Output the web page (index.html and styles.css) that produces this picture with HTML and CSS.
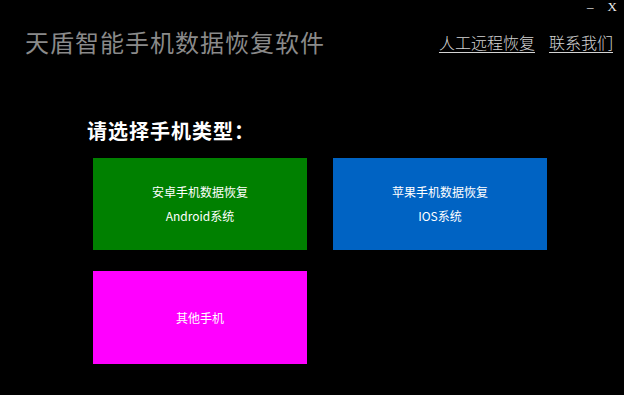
FILE: index.html
```html
<!DOCTYPE html>
<html lang="zh-CN">

<head>
    <meta charset="UTF-8">
    <meta name="viewport" content="width=device-width, initial-scale=1.0">
    <title>天盾智能手机数据恢复软件</title>
    <link rel="stylesheet" href="styles.css">
</head>

<body>
    <div class="window">
        <div class="titlebar">
            <span class="win-btn win-min">–</span>
            <span class="win-btn win-close">X</span>
        </div>
        <div class="header">
            <h1 class="app-title">天盾智能手机数据恢复软件</h1>
            <div class="links">
                <a href="#" class="link">人工远程恢复</a>
                <a href="#" class="link">联系我们</a>
            </div>
        </div>
        <div class="content">
            <h2 class="choose">请选择手机类型：</h2>
            <div class="tiles">
                <a href="#" class="tile tile-android">
                    <span>安卓手机数据恢复</span>
                    <span>Android系统</span>
                </a>
                <a href="#" class="tile tile-ios">
                    <span>苹果手机数据恢复</span>
                    <span>IOS系统</span>
                </a>
                <a href="#" class="tile tile-other">
                    <span>其他手机</span>
                </a>
            </div>
        </div>
    </div>
</body>

</html>
```

FILE: styles.css
```css
html,
body {
    margin: 0;
    width: 624px;
    height: 395px;
    background: #000;
    overflow: hidden;
}

.window {
    font-family: "Noto Sans CJK SC", "Noto Sans", sans-serif;
    color: #fff;
}

/* 右上角的最小化、关闭 */
.titlebar {
    height: 16px;
    display: flex;
    justify-content: flex-end;
    padding-right: 7px;
    font-family: "Liberation Serif", serif;
    font-size: 13px;
    line-height: 14px;
}

.win-btn {
    color: #eee;
    cursor: pointer;
}

.win-min {
    margin-right: 14px;
}

.header {
    margin-top: 12px;
    padding: 0 11px 0 25px;
    display: flex;
    justify-content: space-between;
    align-items: center;
}

.app-title {
    margin: 0;
    font-size: 24px;
    line-height: 28px;
    font-weight: normal;
    letter-spacing: 1px;
    color: #8a8a8a;
}

.links {
    display: flex;
    gap: 14px;
}

.link {
    font-size: 16px;
    line-height: 20px;
    font-weight: 300;
    color: #d4d4d4;
    text-decoration: underline;
    text-underline-offset: 3px;
}

.content {
    padding-left: 87px;
}

.choose {
    margin: 63px 0 15px;
    font-size: 20px;
    line-height: 24px;
    font-weight: bold;
    letter-spacing: 1px;
}

.tiles {
    margin-left: 6px;
    display: grid;
    grid-template-columns: 214px 214px;
    grid-template-rows: 92px 93px;
    gap: 21px 26px;
}

.tile {
    display: flex;
    flex-direction: column;
    align-items: center;
    justify-content: center;
    gap: 12px;
    font-size: 12px;
    line-height: 12px;
    color: #fff;
    text-decoration: none;
}

.tile-android {
    background: #008000;
}

.tile-ios {
    background: #0063c3;
}

.tile-other {
    background: #ff00ff;
}
```
